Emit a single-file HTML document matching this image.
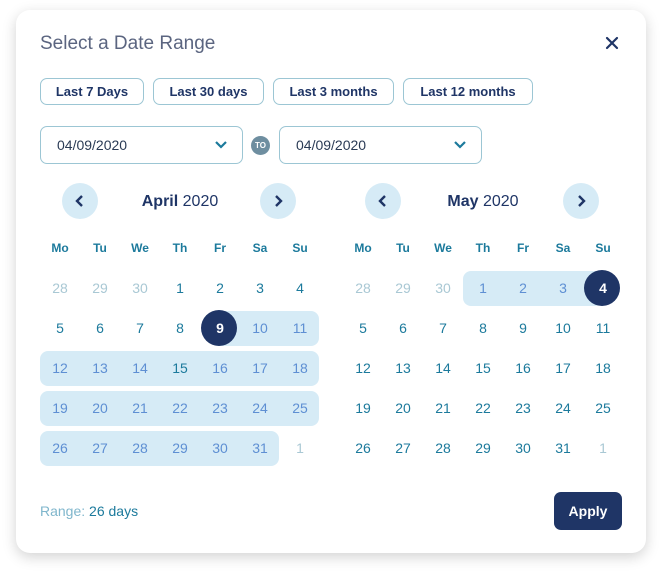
<!DOCTYPE html>
<html><head><meta charset="utf-8"><style>
*{box-sizing:border-box;margin:0;padding:0}
body{width:662px;height:576px;background:#fff;font-family:"Liberation Sans",sans-serif;position:relative;overflow:hidden}
.card{position:absolute;left:16px;top:10px;width:630px;height:543px;background:#fff;border-radius:14px;box-shadow:0 4px 14px rgba(0,0,0,.18)}
.a{position:absolute}
.title{left:40px;top:33px;font-size:19px;color:#5b6580}
.close{left:603px;top:34px;width:18px;height:18px}
.chip{position:absolute;top:78px;height:27px;border:1px solid #9cc6d4;border-radius:7px;font-size:13px;font-weight:bold;color:#1f3566;text-align:center;line-height:25px}
.inp{position:absolute;top:126px;height:38px;border:1px solid #9cc6d4;border-radius:7px;font-size:14px;color:#2a3b55;padding-left:16px;line-height:36px}
.inp svg{position:absolute;right:14px;top:13px}
.to{left:251px;top:136px;width:19px;height:19px;border-radius:50%;background:#6e8ea0;color:#fff;font-size:8px;font-weight:bold;text-align:center;line-height:19px}
.nav{position:absolute;top:183px;width:36px;height:36px;border-radius:50%;background:#d6ebf6}
.nav svg{position:absolute;left:11px;top:11px}
.mon{position:absolute;top:193px;width:200px;text-align:center;font-size:16px;color:#1f3566}
.band{position:absolute;height:35px;background:#d6ebf6;border-radius:8px}
.grid{position:absolute;z-index:1;width:280px;display:grid;grid-template-columns:repeat(7,40px)}
.grid div{height:40px;line-height:40px;text-align:center;font-size:14px;color:#1c7a9c;position:relative}
.grid .h{font-weight:bold;font-size:12px;color:#1c7a9c}
.grid .f{color:#a9c8d4}
.grid .r{color:#5e8fd3}
.grid .s{color:#fff;font-weight:bold}
.grid .s:before{content:"";position:absolute;left:1px;top:2px;width:36px;height:36px;border-radius:50%;background:#1f3566;z-index:0}
.grid .s span{position:relative;z-index:1}
.range{left:40px;top:503px;font-size:14px;color:#7fb6cc}
.range b{font-weight:normal;color:#1c7a9c}
.apply{left:554px;top:492px;width:68px;height:38px;border-radius:7px;background:#1f3566;color:#fff;font-size:14px;font-weight:bold;text-align:center;line-height:38px}
</style></head><body>
<div class="card"></div>
<div class="a title">Select a Date Range</div>
<svg class="a close" viewBox="0 0 18 18"><path d="M4 4L14 14M14 4L4 14" stroke="#1f3566" stroke-width="2.2" stroke-linecap="round"/></svg>
<div class="chip" style="left:40px;width:104px">Last 7 Days</div>
<div class="chip" style="left:153px;width:111px">Last 30 days</div>
<div class="chip" style="left:273px;width:121px">Last 3 months</div>
<div class="chip" style="left:403px;width:130px">Last 12 months</div>
<div class="inp" style="left:40px;width:203px">04/09/2020<svg width="14" height="10" viewBox="0 0 14 10"><path d="M2 2L7 7L12 2" stroke="#1c7a9c" stroke-width="2.2" fill="none"/></svg></div>
<div class="a to">TO</div>
<div class="inp" style="left:279px;width:203px">04/09/2020<svg width="14" height="10" viewBox="0 0 14 10"><path d="M2 2L7 7L12 2" stroke="#1c7a9c" stroke-width="2.2" fill="none"/></svg></div>

<div class="nav" style="left:62px"><svg width="14" height="14" viewBox="0 0 14 14"><path d="M9 2L4 7L9 12" stroke="#1f3566" stroke-width="2.4" fill="none"/></svg></div>
<div class="nav" style="left:260px"><svg width="14" height="14" viewBox="0 0 14 14"><path d="M5 2L10 7L5 12" stroke="#1f3566" stroke-width="2.4" fill="none"/></svg></div>
<div class="nav" style="left:365px"><svg width="14" height="14" viewBox="0 0 14 14"><path d="M9 2L4 7L9 12" stroke="#1f3566" stroke-width="2.4" fill="none"/></svg></div>
<div class="nav" style="left:563px"><svg width="14" height="14" viewBox="0 0 14 14"><path d="M5 2L10 7L5 12" stroke="#1f3566" stroke-width="2.4" fill="none"/></svg></div>
<div class="mon" style="left:80px"><b>April</b> 2020</div>
<div class="mon" style="left:383px"><b>May</b> 2020</div>

<div class="band" style="left:210px;top:311px;width:109px"></div>
<div class="band" style="left:40px;top:351px;width:279px"></div>
<div class="band" style="left:40px;top:391px;width:279px"></div>
<div class="band" style="left:40px;top:431px;width:239px"></div>
<div class="band" style="left:463px;top:271px;width:140px"></div>

<div class="grid" style="left:40px;top:228px">
<div class="h">Mo</div><div class="h">Tu</div><div class="h">We</div><div class="h">Th</div><div class="h">Fr</div><div class="h">Sa</div><div class="h">Su</div>
<div class="f">28</div><div class="f">29</div><div class="f">30</div><div>1</div><div>2</div><div>3</div><div>4</div>
<div>5</div><div>6</div><div>7</div><div>8</div><div class="s"><span>9</span></div><div class="r">10</div><div class="r">11</div>
<div class="r">12</div><div class="r">13</div><div class="r">14</div><div>15</div><div class="r">16</div><div class="r">17</div><div class="r">18</div>
<div class="r">19</div><div class="r">20</div><div class="r">21</div><div class="r">22</div><div class="r">23</div><div class="r">24</div><div class="r">25</div>
<div class="r">26</div><div class="r">27</div><div class="r">28</div><div class="r">29</div><div class="r">30</div><div class="r">31</div><div class="f">1</div>
</div>
<div class="grid" style="left:343px;top:228px">
<div class="h">Mo</div><div class="h">Tu</div><div class="h">We</div><div class="h">Th</div><div class="h">Fr</div><div class="h">Sa</div><div class="h">Su</div>
<div class="f">28</div><div class="f">29</div><div class="f">30</div><div class="r">1</div><div class="r">2</div><div class="r">3</div><div class="s"><span>4</span></div>
<div>5</div><div>6</div><div>7</div><div>8</div><div>9</div><div>10</div><div>11</div>
<div>12</div><div>13</div><div>14</div><div>15</div><div>16</div><div>17</div><div>18</div>
<div>19</div><div>20</div><div>21</div><div>22</div><div>23</div><div>24</div><div>25</div>
<div>26</div><div>27</div><div>28</div><div>29</div><div>30</div><div>31</div><div class="f">1</div>
</div>

<div class="a range">Range: <b>26 days</b></div>
<div class="a apply">Apply</div>
</body></html>
